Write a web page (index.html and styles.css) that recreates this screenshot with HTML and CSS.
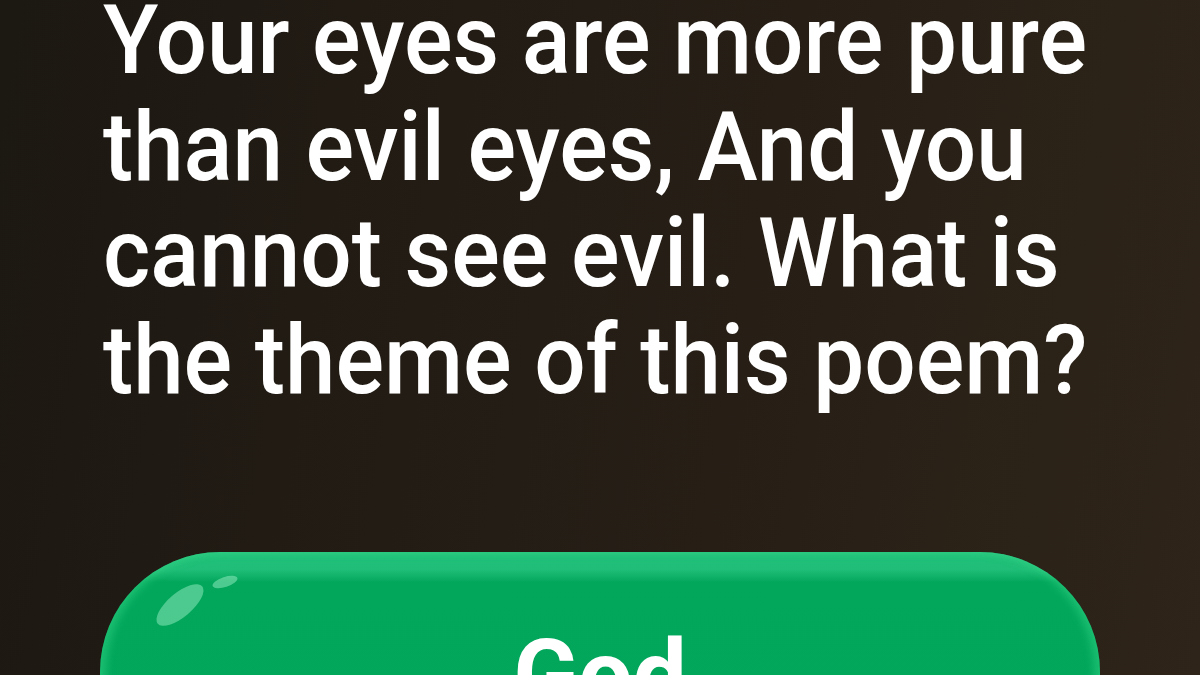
FILE: index.html
```html
<!DOCTYPE html>
<html lang="en">
<head>
    <meta charset="UTF-8">
    <meta name="viewport" content="width=device-width, initial-scale=1.0">
    <title>Poem Quiz</title>
    <link rel="stylesheet" href="styles.css">
</head>
<body>
    <div class="quiz">
        <h1 class="question">Your eyes are more pure than evil eyes, And you cannot see evil. What is the theme of this poem?</h1>
        <div class="answer">
            <!-- glossy highlights -->
            <span class="shine shine-big"></span>
            <span class="shine shine-small"></span>
            <span class="answer-text">God</span>
        </div>
    </div>
</body>
</html>
```

FILE: styles.css
```css
body {
    margin: 0;
    height: 675px;
    overflow: hidden;
    font-family: 'Roboto', 'Liberation Sans', sans-serif;
    background: linear-gradient(100deg, #1c1812 0%, #241d15 45%, #2e2419 100%);
}

.quiz {
    padding: 0 0 0 103px;
}

.question {
    width: 1070px;
    margin: -13px 0 0 0;
    font-size: 96px;
    font-weight: 500;
    line-height: 106.5px;
    color: #ffffff;
    transform: scaleX(0.945);
    transform-origin: left top;
}

.answer {
    position: relative;
    width: 1000px;
    margin: 139px 0 0 -3px;
    padding: 75px 0 70px 0;
    border-radius: 120px;
    font-size: 96px;
    font-weight: 700;
    line-height: 96px;
    color: #ffffff;
    text-align: center;
    background: linear-gradient(180deg, #22c17b 0px, #1fbd77 18px, #03a75c 30px, #00a65a 100%);
    box-shadow: inset 6px 0 8px rgba(60, 220, 140, 0.45), inset -6px 0 8px rgba(60, 220, 140, 0.45);
}

.answer-text {
    display: inline-block;
}

.shine {
    position: absolute;
    border-radius: 50%;
    background: rgba(190, 255, 220, 0.4);
}

.shine-big {
    left: 51px;
    top: 41px;
    width: 58px;
    height: 24px;
    transform: rotate(-40deg);
}

.shine-small {
    left: 112px;
    top: 25px;
    width: 26px;
    height: 10px;
    transform: rotate(-18deg);
}
```
